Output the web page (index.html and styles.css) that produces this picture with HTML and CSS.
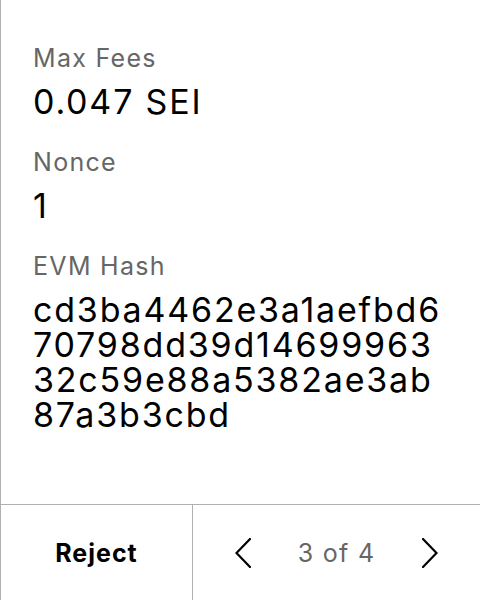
FILE: index.html
```html
<!DOCTYPE html>
<html>
<head>
<meta charset="utf-8">
<link rel="stylesheet" href="styles.css">
</head>
<body>
<div class="screen">
  <div class="details">
    <div class="field">
      <div class="label">Max Fees</div>
      <div class="value">0.047 SEI</div>
    </div>
    <div class="field">
      <div class="label">Nonce</div>
      <div class="value">1</div>
    </div>
    <div class="field">
      <div class="label">EVM Hash</div>
      <div class="value hash">cd3ba4462e3a1aefbd6<br>70798dd39d14699963<br>32c59e88a5382ae3ab<br>87a3b3cbd</div>
    </div>
  </div>
  <div class="footer">
    <div class="reject">Reject</div>
    <div class="pager">
      <svg class="chev" width="16" height="30" viewBox="0 0 16 30"><path d="M15 1 L1.5 15 L15 29" fill="none" stroke="#000" stroke-width="2.2" stroke-linecap="round" stroke-linejoin="miter"/></svg>
      <span class="count">3 of 4</span>
      <svg class="chev" width="16" height="30" viewBox="0 0 16 30"><path d="M1 1 L14.5 15 L1 29" fill="none" stroke="#000" stroke-width="2.2" stroke-linecap="round" stroke-linejoin="miter"/></svg>
    </div>
  </div>
</div>
</body>
</html>
```
FILE: styles.css
```css
html, body {
  margin: 0;
  padding: 0;
  background: #fff;
}
body {
  font-family: Inter, "Noto Sans", sans-serif;
  color: #000;
}
.screen {
  width: 480px;
  height: 600px;
  box-sizing: border-box;
  border-left: 1px solid #b0b0b0;
  display: flex;
  flex-direction: column;
}
.details {
  flex: 1;
  padding: 43px 30px 0 32px;
}
.field {
  margin-bottom: 28px;
}
.label {
  font-size: 25px;
  line-height: 30px;
  letter-spacing: 1.3px;
  color: #666;
  margin-bottom: 11px;
}
.value {
  font-size: 34px;
  line-height: 35px;
  letter-spacing: 1.8px;
  color: #000;
}
.hash {
  word-break: break-all;
}
.footer {
  height: 96px;
  border-top: 1px solid #b0b0b0;
  display: flex;
  box-sizing: border-box;
}
.reject {
  width: 192px;
  box-sizing: border-box;
  border-right: 1px solid #b0b0b0;
  display: flex;
  align-items: center;
  justify-content: center;
  font-size: 25px;
  font-weight: 700;
  letter-spacing: 1px;
}
.pager {
  flex: 1;
  display: flex;
  align-items: center;
  justify-content: center;
  gap: 47px;
}
.count {
  font-size: 25px;
  letter-spacing: 1.3px;
  color: #666;
}
```
